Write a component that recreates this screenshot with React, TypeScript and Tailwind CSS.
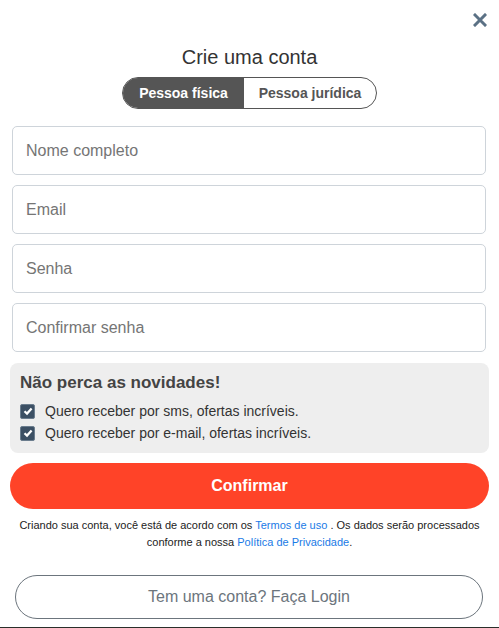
import { useState } from "react";

function Field({ placeholder, type = "text" }: { placeholder: string; type?: string }) {
  return (
    <input
      type={type}
      placeholder={placeholder}
      className="block w-full h-[49px] rounded-[5px] border border-[#ced4da] bg-white px-[13px] text-[16px] text-[#333] placeholder:text-[#757575] outline-none"
    />
  );
}

function Check({ label }: { label: string }) {
  return (
    <label className="flex items-center gap-[10px] text-[14px] leading-[22px] text-[#333]">
      <span className="flex h-[15px] w-[15px] items-center justify-center rounded-[2px] border border-[#6b7d8e] bg-[#3c5064]">
        <svg width="10" height="10" viewBox="0 0 10 10">
          <path d="M1.5 5.2 L4 7.6 L8.6 2.4" fill="none" stroke="#fff" strokeWidth="2.2" />
        </svg>
      </span>
      {label}
    </label>
  );
}

export default function App() {
  const [tipo, setTipo] = useState("fisica");

  return (
    <div className="relative h-[628px] w-[499px] overflow-hidden bg-white font-[family-name:Liberation_Sans,Arial,sans-serif] border-b border-[#2a2f2a]">
      <button className="absolute right-[12px] top-[13px] text-[#5b7185]">
        <svg width="14" height="14" viewBox="0 0 14 14">
          <path d="M2 2 L12 12 M12 2 L2 12" stroke="currentColor" strokeWidth="3" strokeLinecap="square" />
        </svg>
      </button>

      <div className="px-[12px] pt-[43px]">
        <h1 className="text-center text-[20px] leading-[28px] text-[#333]">Crie uma conta</h1>

        <div className="mt-[6px] flex justify-center">
          <div className="flex h-[32px] overflow-hidden rounded-full border border-[#555]">
            <button
              onClick={() => setTipo("fisica")}
              className={
                tipo === "fisica"
                  ? "w-[121px] bg-[#555] text-[14px] font-bold text-white"
                  : "w-[121px] text-[14px] font-bold text-[#555]"
              }
            >
              Pessoa física
            </button>
            <button
              onClick={() => setTipo("juridica")}
              className={
                tipo === "juridica"
                  ? "w-[132px] bg-[#555] text-[14px] font-bold text-white"
                  : "w-[132px] text-[14px] font-bold text-[#555]"
              }
            >
              Pessoa jurídica
            </button>
          </div>
        </div>

        <div className="mt-[17px] flex flex-col gap-[10px] mr-[1px]">
          <Field placeholder="Nome completo" />
          <Field placeholder="Email" type="email" />
          <Field placeholder="Senha" type="password" />
          <Field placeholder="Confirmar senha" type="password" />
        </div>
      </div>

      <div className="mx-[10px] mt-[11px] rounded-[8px] bg-[#eeeeee] px-[10px] pt-[9px] pb-[9px]">
        <h2 className="text-[17px] font-bold leading-[22px] text-[#444]">Não perca as novidades!</h2>
        <div className="mt-[6px] flex flex-col">
          <Check label="Quero receber por sms, ofertas incríveis." />
          <Check label="Quero receber por e-mail, ofertas incríveis." />
        </div>
      </div>

      <div className="px-[10px]">
        <button className="mt-[10px] h-[46px] w-full rounded-full bg-[#ff4328] text-[16px] font-bold text-white">
          Confirmar
        </button>

        <p className="mt-[8px] px-[6px] text-center text-[11px] leading-[17px] text-[#222]">
          Criando sua conta, você está de acordo com os <a className="text-[#1a7ae6]">Termos de uso</a> . Os dados serão processados conforme a nossa{" "}
          <a className="text-[#1a7ae6]">Política de Privacidade</a>.
        </p>

        <button className="mx-[5px] mt-[24px] h-[44px] w-[468px] rounded-full border border-[#6c757d] text-[16px] text-[#6c757d]">
          Tem uma conta? Faça Login
        </button>
      </div>
    </div>
  );
}
